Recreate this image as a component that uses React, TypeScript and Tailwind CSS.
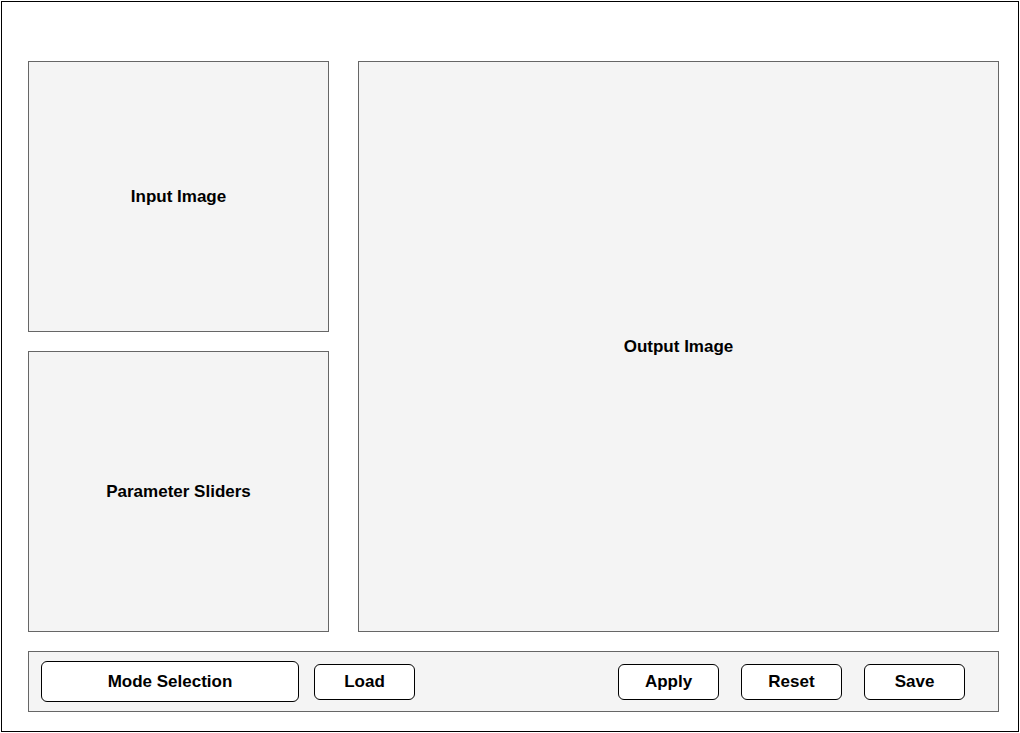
export default function App() {
  return (
    <div className="w-[1020px] h-[733px] bg-white pl-[1px] pt-[1px] font-['Liberation_Sans',Arial,sans-serif] text-black">
      <div className="w-[1018px] h-[731px] border border-black pl-[26px] pt-[59px] flex flex-col gap-[19px]">
        {/* Main area */}
        <div className="flex gap-[29px] h-[571px]">
          <div className="w-[301px] flex flex-col gap-[19px]">
            <div className="h-[271px] border border-[#666666] bg-[#f4f4f4] flex items-center justify-center pt-[1px]">
              <span className="text-[17px] font-bold">Input Image</span>
            </div>
            <div className="h-[281px] border border-[#666666] bg-[#f4f4f4] flex items-center justify-center pt-[1px]">
              <span className="text-[17px] font-bold">Parameter Sliders</span>
            </div>
          </div>
          <div className="w-[641px] border border-[#666666] bg-[#f4f4f4] flex items-center justify-center pt-[1px]">
            <span className="text-[17px] font-bold">Output Image</span>
          </div>
        </div>

        {/* Bottom toolbar */}
        <div className="w-[971px] h-[61px] border border-[#666666] bg-[#f4f4f4] flex items-center pl-[12px] pr-[33px]">
          <button className="w-[258px] h-[41px] bg-white border border-black rounded-[6px] text-[17px] font-bold">
            Mode Selection
          </button>
          <button className="ml-[15px] w-[101px] h-[36px] bg-white border border-black rounded-[6px] text-[17px] font-bold">
            Load
          </button>
          <div className="flex-1" />
          <div className="flex gap-[22px]">
            <button className="w-[101px] h-[36px] bg-white border border-black rounded-[6px] text-[17px] font-bold">
              Apply
            </button>
            <button className="w-[101px] h-[36px] bg-white border border-black rounded-[6px] text-[17px] font-bold">
              Reset
            </button>
            <button className="w-[101px] h-[36px] bg-white border border-black rounded-[6px] text-[17px] font-bold">
              Save
            </button>
          </div>
        </div>
      </div>
    </div>
  );
}
